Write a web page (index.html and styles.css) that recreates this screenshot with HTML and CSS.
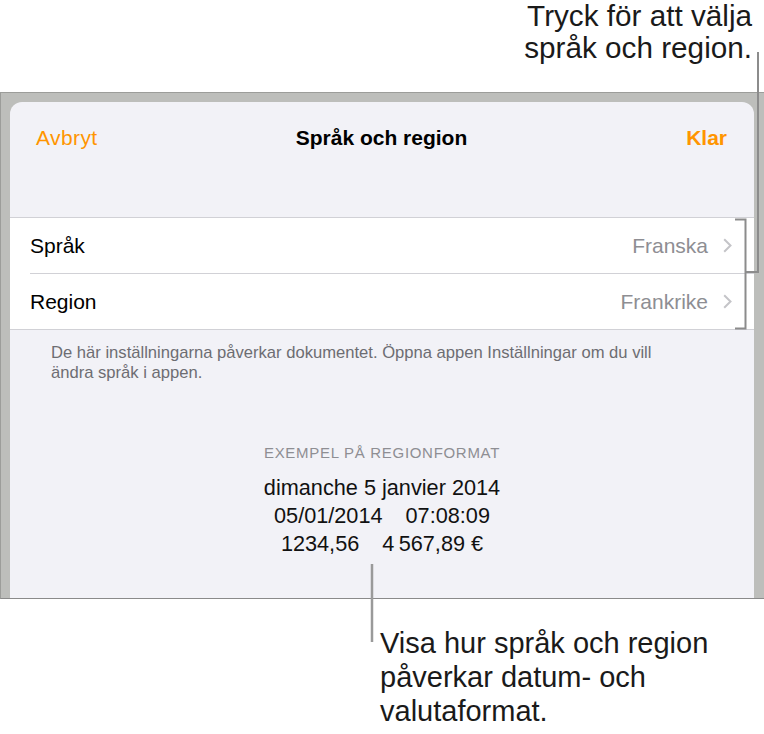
FILE: index.html
```html
<!DOCTYPE html>
<html lang="sv">
<head>
<meta charset="utf-8">
<title>Språk och region</title>
<link rel="stylesheet" href="styles.css">
</head>
<body>
<div class="page">
  <div class="callout callout-top">Tryck för att välja<br>språk och region.</div>

  <div class="frame">
    <div class="sheet">
      <div class="nav">
        <span class="nav-btn cancel">Avbryt</span>
        <span class="nav-title">Språk och region</span>
        <span class="nav-btn done">Klar</span>
      </div>

      <div class="group">
        <div class="row">
          <span class="label">Språk</span>
          <span class="value">Franska</span>
          <svg class="chev" width="9" height="15" viewBox="0 0 9 15"><path d="M1.2 1.2 L7.5 7.5 L1.2 13.8" fill="none" stroke="#c4c4c8" stroke-width="2"/></svg>
        </div>
        <div class="sep"></div>
        <div class="row">
          <span class="label">Region</span>
          <span class="value">Frankrike</span>
          <svg class="chev" width="9" height="15" viewBox="0 0 9 15"><path d="M1.2 1.2 L7.5 7.5 L1.2 13.8" fill="none" stroke="#c4c4c8" stroke-width="2"/></svg>
        </div>
      </div>

      <p class="footer">De här inställningarna påverkar dokumentet. Öppna appen Inställningar om du vill<br>ändra språk i appen.</p>

      <div class="example">
        <div class="ex-head">EXEMPEL PÅ REGIONFORMAT</div>
        <div class="ex-line">dimanche 5 janvier 2014</div>
        <div class="ex-line"><span>05/01/2014</span><span>07:08:09</span></div>
        <div class="ex-line"><span>1234,56</span><span>4&#8239;567,89&nbsp;€</span></div>
      </div>
    </div>
  </div>

  <div class="callout callout-bottom">Visa hur språk och region<br>påverkar datum- och<br>valutaformat.</div>

  <svg class="leaders" width="764" height="734" viewBox="0 0 764 734">
    <g fill="none" stroke="#8c8c8c" stroke-width="2">
      <path d="M758 52 V273"/>
      <path d="M745 272 H759"/>
      <path d="M735 219.5 H745.5 V328.5 H735"/>
      <path d="M372 564 V642" stroke="#9a9a9a" stroke-width="2.5"/>
    </g>
  </svg>
</div>
</body>
</html>
```

FILE: styles.css
```css
* { box-sizing: border-box; }

html, body {
  margin: 0;
  padding: 0;
  background: #ffffff;
}

body {
  font-family: "Liberation Sans", Arial, sans-serif;
  color: #000;
}

.page {
  position: relative;
  width: 764px;
  height: 734px;
  overflow: hidden;
}

.callout {
  font-size: 29px;
  color: #1a1a1a;
}

.callout-top {
  height: 92px;
  font-size: 29.7px;
  line-height: 32px;
  text-align: right;
  padding-right: 12px;
}

.callout-bottom {
  margin-top: 27px;
  line-height: 34px;
  padding-left: 380px;
}

.frame {
  background: #bdbebb;
  border-top: 1px solid #9c9d9a;
  border-left: 1px solid #9c9d9a;
  border-bottom: 1px solid #8a8a8a;
  padding: 9px 10px 0 9px;
}

.sheet {
  height: 496px;
  background: #f2f2f7;
  border-radius: 12px 12px 0 0;
  overflow: hidden;
}

.nav {
  height: 72px;
  display: grid;
  grid-template-columns: 1fr auto 1fr;
  align-items: center;
  padding: 0 27px 0 26px;
  font-size: 21px;
}

.nav-btn { color: #ff9500; }
.cancel { justify-self: start; letter-spacing: 0.4px; }
.done { justify-self: end; font-weight: bold; }
.nav-title { font-weight: bold; color: #000; }

.group {
  margin-top: 43px;
  background: #fff;
  border-top: 1px solid #d1d1d6;
  border-bottom: 1px solid #d1d1d6;
}

.row {
  height: 55px;
  display: flex;
  align-items: center;
  padding: 0 22px 0 20px;
  font-size: 21px;
}

.label { flex: 1; }

.value {
  color: #8e8e93;
  margin-right: 15px;
}

.chev { display: block; }

.sep {
  height: 1px;
  margin-left: 20px;
  background: #d1d1d6;
}

.footer {
  margin: 13px 0 0;
  padding: 0 30px 0 41px;
  font-size: 16.6px;
  line-height: 20px;
  color: #6d6d72;
}

.example {
  margin-top: 60px;
  text-align: center;
}

.ex-head {
  font-size: 15px;
  line-height: 20px;
  color: #8e8e93;
  letter-spacing: 0.7px;
  margin-bottom: 11px;
}

.ex-line {
  font-size: 21.7px;
  line-height: 28px;
  color: #111;
  display: flex;
  justify-content: center;
  gap: 23px;
}

.leaders {
  position: absolute;
  left: 0;
  top: 0;
  pointer-events: none;
}
```
